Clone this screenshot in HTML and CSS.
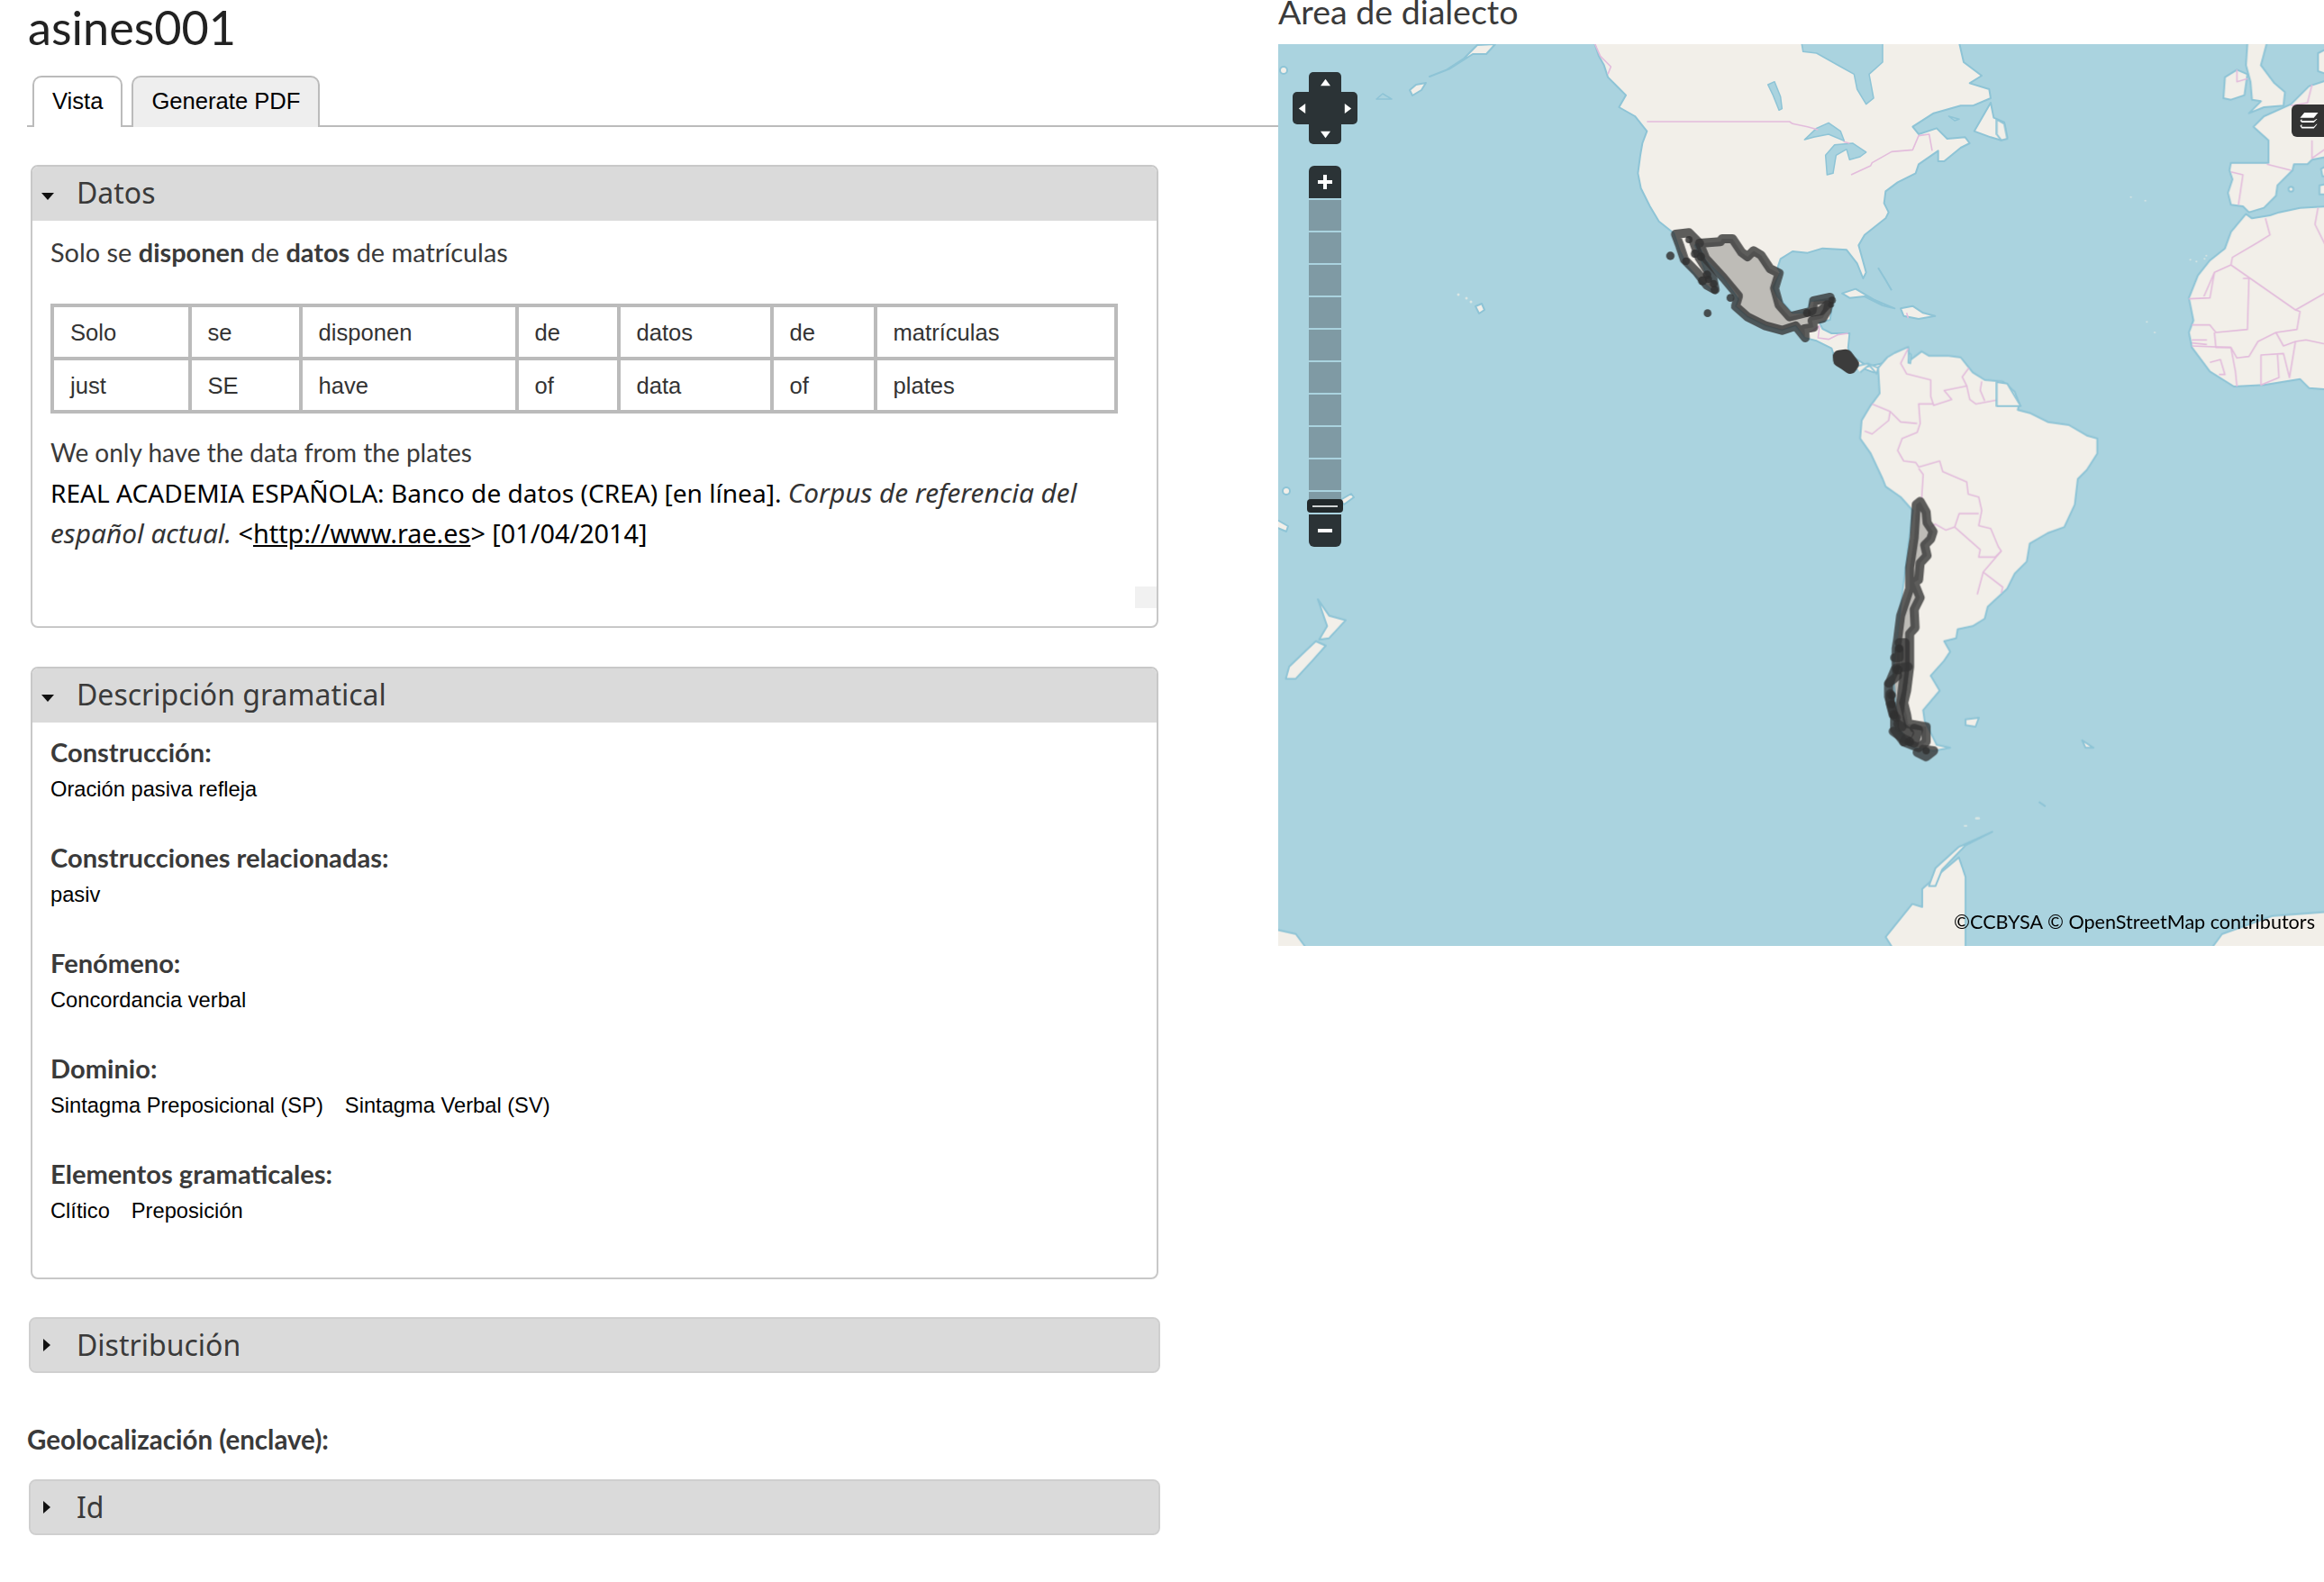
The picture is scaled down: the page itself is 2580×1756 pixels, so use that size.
FILE: index.html
```html
<!DOCTYPE html>
<html lang="es">
<head>
<meta charset="utf-8">
<title>asines001</title>
<link rel="stylesheet" href="styles.css">
</head>
<body>
<div class="page">
  <main class="left">
    <h1 class="title">asines001</h1>
    <ul class="tabs">
      <li class="tab tab-active">Vista</li>
      <li class="tab">Generate PDF</li>
    </ul>

    <section class="panel panel-datos">
      <h3 class="panel-head"><span class="arrow-down"></span>Datos</h3>
      <div class="panel-body">
        <p class="lead">Solo se <strong>disponen</strong> de <strong>datos</strong> de matrículas</p>
        <table class="gloss">
          <tr><td>Solo</td><td>se</td><td>disponen</td><td>de</td><td>datos</td><td>de</td><td>matrículas</td></tr>
          <tr><td>just</td><td>SE</td><td>have</td><td>of</td><td>data</td><td>of</td><td>plates</td></tr>
        </table>
        <p class="lead translation">We only have the data from the plates</p>
        <p class="cite">REAL ACADEMIA ESPAÑOLA: Banco de datos (CREA) [en línea]. <em>Corpus de referencia del español actual.</em> <span class="cite-end">&lt;<a href="#">http://www.rae.es</a>&gt; [01/04/2014]</span></p>
      </div>
      <div class="grip"></div>
    </section>

    <section class="panel panel-desc">
      <h3 class="panel-head"><span class="arrow-down"></span>Descripción gramatical</h3>
      <div class="panel-body">
        <div class="field"><div class="label">Construcción:</div><div class="values"><span>Oración pasiva refleja</span></div></div>
        <div class="field"><div class="label">Construcciones relacionadas:</div><div class="values"><span>pasiv</span></div></div>
        <div class="field"><div class="label">Fenómeno:</div><div class="values"><span>Concordancia verbal</span></div></div>
        <div class="field"><div class="label">Dominio:</div><div class="values"><span>Sintagma Preposicional (SP)</span><span>Sintagma Verbal (SV)</span></div></div>
        <div class="field"><div class="label">Elementos gramaticales:</div><div class="values"><span>Clítico</span><span>Preposición</span></div></div>
      </div>
    </section>

    <section class="panel panel-closed">
      <h3 class="panel-head"><span class="arrow-right"></span>Distribución</h3>
    </section>

    <div class="geo">Geolocalización (enclave):</div>

    <section class="panel panel-closed">
      <h3 class="panel-head"><span class="arrow-right"></span>Id</h3>
    </section>
  </main>

  <aside class="right">
    <h2 class="map-title">Area de dialecto</h2>
    <div class="map">
      <svg class="map-svg" viewBox="1419 49 1161 1001" width="1161" height="1001" aria-hidden="true">
        <g class="base">
          <!-- North America -->
          <g transform="translate(1760 49) scale(.33333)">
            <polygon class="land" points="30,-5 45,40 62,70 75,110 100,135 135,170 112,210 165,240 205,290 190,330 183,370 175,430 185,480 215,540 245,590 295,630 315,690 340,740 385,790 425,820 435,810 400,760 380,700 365,670 375,665 400,720 460,780 510,850 500,873 540,908 600,938 655,953 700,938 730,978 770,988 820,1013 830,1043 890,1088 920,1078 960,1093 990,1088 990,1063 940,1073 895,1043 875,1013 880,963 820,963 790,948 780,928 815,918 825,850 750,855 735,895 690,895 640,840 625,810 650,760 640,745 650,715 690,690 740,695 790,680 870,685 905,730 925,780 935,760 910,670 930,635 1000,580 1010,560 995,530 1000,490 1040,460 1100,430 1110,400 1175,355 1175,390 1195,390 1250,345 1280,330 1265,310 1205,315 1170,280 1110,300 1090,275 1160,230 1250,205 1290,205 1350,180 1345,150 1280,130 1320,105 1260,60 1245,-5"/>
            <polygon class="water" points="720,-5 725,25 770,30 850,75 895,100 905,150 935,200 960,180 945,100 990,60 990,-5"/>
            <polygon class="land" points="1350,195 1295,290 1350,310 1385,320 1405,310 1395,260 1360,245"/>
            <polygon class="water" points="730,318 770,280 810,262 850,290 862,322 810,300 760,310"/>
            <polygon class="water" points="800,370 830,335 890,330 935,360 915,375 880,385 870,350 835,370 825,430 805,435"/>
            <polygon class="water" points="608,135 630,125 650,175 655,215 645,220 625,170"/>
            <polygon class="water" points="1210,240 1245,250 1230,255"/>
            <polygon class="land" points="855,830 900,815 960,850 1030,880 990,870 930,840 880,845"/>
            <polygon class="land" points="1050,880 1090,872 1125,895 1165,905 1110,915 1060,905"/>
            <polyline class="coast" points="975,745 1000,785 1020,820"/>
            <polyline class="border" points="205,258 680,258 690,265 740,275 775,285"/>
            <polyline class="border" points="860,325 880,330"/>
            <polyline class="border" points="885,435 950,405 955,395 1020,358 1090,352 1110,305 1145,300 1155,355"/>
            <polyline class="border" points="30,-5 50,40 85,75 75,100"/>
            <polyline class="border" points="1070,895 1075,912"/>
          </g>
          <!-- Central America borders -->
          <g transform="translate(1780 230) scale(.33333)">
            <polyline class="border" points="690,415 720,395 715,435 750,440 780,425 815,420"/>
            <polyline class="border" points="915,530 925,548"/>
          </g>
          <!-- South America -->
          <g transform="translate(2020 380) scale(.33333)">
            <polygon class="land" points="195,85 225,50 250,35 295,15 300,60 340,30 365,45 430,45 470,50 510,100 550,125 610,130 650,165 665,205 660,225 700,235 760,265 830,275 890,310 925,320 925,370 890,425 860,455 850,540 815,615 760,635 700,670 690,730 650,770 625,820 560,880 550,920 510,945 460,955 455,985 415,995 435,1030 415,1060 370,1110 400,1160 345,1225 350,1260 390,1340 435,1350 380,1360 310,1350 260,1280 245,1100 270,880 310,560 270,515 220,480 210,455 170,370 135,320 140,260 170,210 200,170"/>
            <polyline class="land" points="120,80 160,70 195,85 190,105 165,75 135,100"/>
            <polyline class="border" points="295,20 270,70 290,105 370,125 370,180 380,210 440,190 415,160 490,145 475,115 497,85"/>
            <polyline class="border" points="490,145 500,190 520,205 600,190 635,160"/>
            <polyline class="border" points="540,130 535,160 550,195"/>
            <polyline class="border" points="595,130 595,190"/>
            <polyline class="border" points="380,205 330,205 335,270 325,300 275,320 260,360 280,395 320,400 330,415 400,395 410,430 490,465 495,505 530,515 540,560 530,610 570,620 595,680 605,695 585,715 530,715 535,690 450,615 420,625 385,605 370,615"/>
            <polyline class="border" points="175,205 235,230 270,265 325,270"/>
            <polyline class="border" points="235,230 230,260 175,305 150,295"/>
            <polyline class="border" points="330,420 345,440 340,520"/>
            <polyline class="border" points="530,570 465,570 450,615"/>
            <polyline class="border" points="605,695 545,765 525,840"/>
            <polyline class="border" points="545,765 610,815 605,835"/>
            <polygon class="water" points="297,35 305,40 303,70 295,68"/>
          </g>
          <!-- Europe and Africa -->
          <g transform="translate(2220 49) scale(.33333)">
            <polygon class="land" points="825,-5 890,-5 870,70 915,130 950,160 945,205 880,210 830,230 870,190 840,185 835,125 820,70"/>
            <polygon class="land" points="745,180 750,110 790,85 825,100 815,170 770,185"/>
            <polygon class="land" points="1090,120 1030,140 970,200 880,240 845,275 895,320 895,395 770,395 765,420 775,450 760,495 770,535 810,540 830,560 880,545 920,505 925,470 975,420 980,400 1025,400 1040,385 1090,375"/>
            <polygon class="land" points="1060,30 1080,20 1090,20 1090,100 1060,90"/>
            <polygon class="land" points="1090,405 1070,415 1075,440 1090,440"/>
            <polygon class="land" points="1065,470 1090,465 1090,500 1065,500"/>
            <polygon class="land" points="1090,540 1000,545 930,560 900,570 840,580 820,565 770,625 750,680 700,720 660,770 630,845 645,920 630,960 640,1010 700,1090 780,1140 880,1135 1000,1115 1030,1145 1090,1150"/>
            <circle class="land" cx="970" cy="483" r="8"/>
            <polygon class="land" points="-10,1125 25,1130 70,1205 -10,1205"/>
            <polygon class="land" points="-10,250 15,265 25,315 5,320 -10,300"/>
            <polyline class="border" points="790,85 790,125 825,115"/>
            <polyline class="border" points="890,400 970,420"/>
            <polyline class="border" points="770,425 810,435 795,535"/>
            <polyline class="border" points="1040,135 1025,195 970,205"/>
            <polyline class="border" points="1040,320 1040,380 1090,345"/>
            <polyline class="border" points="885,580 900,635 860,660 775,710 770,735 715,760 680,840"/>
            <polyline class="border" points="630,848 700,845 715,760"/>
            <polyline class="border" points="770,735 985,885 1090,825"/>
            <polyline class="border" points="810,780 830,780 825,950 720,960 700,935 640,935"/>
            <polyline class="border" points="985,885 1000,890 990,950 920,960 860,990 830,1040 790,1045 770,1010 720,1010 715,960"/>
            <polyline class="border" points="920,960 945,1005 985,990 1020,985 1090,1000"/>
            <polyline class="border" points="985,990 965,1110 945,1030 870,1035 870,1135 930,1110 925,1030"/>
            <polyline class="border" points="640,985 690,985"/>
            <polyline class="border" points="640,995 690,1000"/>
            <polyline class="border" points="640,1005 770,1010 785,1090 790,1140"/>
            <polyline class="border" points="700,1060 735,1050 750,1100 730,1100"/>
            <polyline class="border" points="1060,545 1050,600 1085,670"/>
            <circle class="isle" cx="635" cy="718" r="3"/><circle class="isle" cx="655" cy="724" r="3"/><circle class="isle" cx="682" cy="715" r="3"/><circle class="isle" cx="688" cy="704" r="3"/><circle class="isle" cx="490" cy="925" r="3"/><circle class="isle" cx="516" cy="960" r="3"/><circle class="isle" cx="485" cy="521" r="3"/><circle class="isle" cx="437" cy="509" r="3"/>
          </g>
          <!-- Pacific islands -->
          <polygon class="land" points="1587,85 1605,78 1625,65 1640,50 1660,49 1650,60 1635,60 1610,76"/>
          <polygon class="land" points="1565,100 1572,94 1583,92 1578,100 1568,106"/>
          <polygon class="water" points="1528,110 1535,104 1545,110"/>
          <polygon class="land" points="1638,340 1645,337 1648,344 1642,348"/>
          <circle class="isle" cx="1619" cy="327" r="1.5"/><circle class="isle" cx="1628" cy="331" r="1.5"/><circle class="isle" cx="1633" cy="335" r="1.5"/>
          <circle class="land" cx="1425" cy="78" r="4"/>
          <circle class="land" cx="1428" cy="545" r="4"/>
          <polygon class="land" points="1488,555 1500,548 1503,552 1492,560"/>
          <polygon class="land" points="1416,576 1430,584 1428,590 1416,585"/>
          <!-- Southern lands -->
          <g transform="translate(1420 540) scale(.73980 .33333)">
            <polygon class="land" points="58,375 75,430 100,445 75,505 60,510 72,465"/>
            <polygon class="land" points="55,515 70,530 50,580 25,640 10,640 15,600"/>
            <polygon class="land" points="1030,775 1050,770 1045,800 1030,795"/>
            <polygon class="land" points="1205,845 1222,870 1210,870"/>
            <polygon class="land" points="920,1535 910,1500 950,1390 965,1400 965,1340 985,1300 1020,1235 1030,1300 1030,1535"/>
            <polygon class="land" points="-5,1475 25,1490 40,1535 -5,1535"/>
            <polygon class="land" points="1400,1535 1415,1490 1490,1430 1580,1415 1580,1535"/>
            <polygon class="land" points="975,1330 985,1270 1020,1200 1070,1150 1030,1195 995,1275 985,1330"/>
            <circle class="isle" cx="1048" cy="1105" r="4"/>
            <circle class="isle" cx="1030" cy="1130" r="3"/>
            <polyline class="coast" points="1140,1050 1150,1065"/>
          </g>
        </g>
        <g class="overlay">
          <!-- Dialect area: Mexico -->
          <g transform="translate(1780 230) scale(.33333)">
            <polygon class="area" points="320,120 390,115 395,105 430,105 460,150 480,165 500,145 525,160 555,205 585,220 570,270 585,325 620,365 680,350 695,345 700,312 755,300 745,345 730,370 695,378 700,400 670,405 672,435 640,395 595,410 540,395 480,365 440,330 450,295 400,235 340,170"/>
            <polyline class="area-line" points="320,120 285,85 240,90 255,130 270,175 310,215 345,260 372,275 365,240 320,170 300,115"/>
            <polyline class="area-line" points="695,350 725,345 745,325"/>
            <circle class="dot" cx="223" cy="162" r="14"/><circle class="dot" cx="347" cy="353" r="13"/><circle class="dot" cx="423" cy="302" r="13"/><circle class="dot" cx="285" cy="108" r="12"/><circle class="dot" cx="275" cy="180" r="13"/><circle class="dot" cx="305" cy="155" r="14"/><circle class="dot" cx="325" cy="165" r="14"/><circle class="dot" cx="345" cy="225" r="14"/><circle class="dot" cx="330" cy="245" r="15"/><circle class="dot" cx="350" cy="240" r="12"/><circle class="dot" cx="367" cy="255" r="13"/><circle class="dot" cx="370" cy="275" r="13"/><circle class="dot" cx="762" cy="310" r="12"/><circle class="dot" cx="758" cy="325" r="10"/><circle class="dot" cx="678" cy="352" r="13"/>
            <polygon class="blob" points="785,497 808,494 830,522 822,534 802,520 786,510"/>
          </g>
          <!-- Dialect area: Chile -->
          <g transform="translate(2050 540) scale(.33333)">
            <polygon class="area" points="245,50 265,85 268,120 288,150 280,175 260,195 268,230 245,255 240,310 225,320 245,370 225,410 228,470 210,490 210,540 210,600 200,680 190,720 200,760 205,790 265,800 265,850 240,870 190,850 160,810 160,770 140,700 140,660 165,600 165,540 170,510 180,430 210,340 210,270 225,170 232,60"/>
            <polyline class="area-line" points="175,520 195,520 195,600 185,680 175,760 185,800"/>
            <polyline class="area-line" points="175,540 175,570 160,570"/>
            <polyline class="area-line" points="205,600 165,605 170,630 140,655"/>
            <polyline class="area-line" points="145,690 145,720 155,760 165,770"/>
            <polyline class="area-line" points="155,815 190,840 225,855 240,810 225,805"/>
            <polyline class="area-line" points="235,885 265,900 290,880 255,875"/>
            <polyline class="area-line" points="170,790 210,820 190,850"/>
            <circle class="dot" cx="175" cy="540" r="13"/><circle class="dot" cx="170" cy="610" r="16"/><circle class="dot" cx="150" cy="695" r="14"/><circle class="dot" cx="150" cy="725" r="14"/><circle class="dot" cx="158" cy="760" r="15"/><circle class="dot" cx="210" cy="850" r="15"/><circle class="dot" cx="265" cy="880" r="12"/>
          </g>
        </g>
      </svg>

      <div class="pan">
        <div class="pan-row pan-top"><svg class="ico" viewBox="0 0 12 12"><polygon points="6,2 12,10 0,10"/></svg></div>
        <div class="pan-row pan-mid">
          <svg class="ico" viewBox="0 0 12 12"><polygon points="2,6 10,0 10,12"/></svg>
          <svg class="ico" viewBox="0 0 12 12"><polygon points="10,6 2,0 2,12"/></svg>
        </div>
        <div class="pan-row pan-bot"><svg class="ico" viewBox="0 0 12 12"><polygon points="6,10 12,2 0,2"/></svg></div>
      </div>

      <div class="zoombar">
        <div class="zoom-btn zoom-in"><svg class="ico-lg" viewBox="0 0 18 18"><path d="M7 1h4v6h6v4h-6v6H7v-6H1V7h6z"/></svg></div>
        <div class="seg"></div><div class="seg"></div><div class="seg"></div><div class="seg"></div><div class="seg"></div><div class="seg"></div><div class="seg"></div><div class="seg"></div><div class="seg"></div><div class="seg seg-last"></div>
        <div class="handle"><span class="handle-line"></span></div>
        <div class="zoom-btn zoom-out"><svg class="ico-lg" viewBox="0 0 18 18"><path d="M1 7h16v4H1z"/></svg></div>
      </div>

      <div class="layers">
        <svg class="ico-layers" viewBox="0 0 22 22"><path d="M6 1h16l-5 6H1z"/><path d="M3 8.5l-2 2 2 2h14l4-4h-1l-3 2H3z"/><path d="M3 14.5l-2 2 2 3h14l4-5h-1l-3 3H3z"/></svg>
      </div>

      <div class="attrib">©CCBYSA © OpenStreetMap contributors</div>
    </div>
  </aside>
</div>
</body>
</html>
```
FILE: styles.css
```css
* { box-sizing: border-box; }
html, body { margin: 0; padding: 0; background: #fff; }
body { font-family: "Lato", "Noto Sans", sans-serif; color: #333; width: 2580px; height: 1756px; overflow: hidden; }

.page { display: grid; grid-template-columns: 1419px 1161px; align-items: start; }

.left { padding-left: 30px; min-width: 0; }
.title { margin: 0 0 0 1px; height: 84px; font-size: 52.2px; line-height: 60px; font-weight: 400; color: #222; }

.tabs { list-style: none; margin: 0; padding: 0 0 0 6px; height: 57px; display: flex; gap: 10px; border-bottom: 2px solid #bbb; }
.tab { height: 57px; padding: 0 20px; font: 25.6px/52px "Liberation Sans", Arial, sans-serif; color: #000; background: #eee; border: 2px solid #bbb; border-bottom: 0; border-radius: 10px 10px 0 0; }
.tab-active { background: #fff; }

.panel { position: relative; margin: 42px 0 0 4px; width: 1252px; border: 2px solid #c8c8c8; border-radius: 8px; background: #fff; }
.panel-head { margin: 0; height: 60px; display: flex; align-items: center; padding: 0 0 3px 49px; position: relative; background: #dadada; font-family: "Noto Sans", sans-serif; font-size: 32px; font-weight: 400; color: #3a3a3a; border-radius: 6px 6px 0 0; }
.panel-closed { margin-left: 2px; width: 1256px; background: #dadada; border-color: #cfcfcf; }
.panel-closed .panel-head { height: 58px; border-radius: 6px; padding: 0 0 2px 51px; }

.arrow-down { position: absolute; left: 10px; top: 29px; border-style: solid; border-width: 8px 7px 0; border-color: #111 transparent transparent; }
.arrow-right { position: absolute; left: 14px; top: 22px; border-style: solid; border-width: 7px 0 7px 8px; border-color: transparent transparent transparent #111; }

.panel-body { padding: 0 20px; }
.panel-datos { height: 514px; }
.panel-desc { height: 680px; margin-top: 43px; }

.lead { margin: 0; font-size: 28.9px; line-height: 45px; color: #3a3a3a; }
.panel-datos .lead:first-child { padding-top: 12px; }
.lead strong { font-weight: 700; }
.translation { margin-top: 21px; font-size: 28px; }

.gloss { margin-top: 35px; border-collapse: collapse; table-layout: fixed; width: 1181px; font: 25.6px/30px "Liberation Sans", Arial, sans-serif; color: #333; }
.gloss td { border: 4px solid #bbb; height: 59px; padding: 0 18px; }
.gloss td:nth-child(1) { width: 152.5px; }
.gloss td:nth-child(2) { width: 123px; }
.gloss td:nth-child(3) { width: 240px; }
.gloss td:nth-child(4) { width: 113px; }
.gloss td:nth-child(5) { width: 170px; }
.gloss td:nth-child(6) { width: 115px; }
.gloss td:nth-child(7) { width: 267.5px; }

.cite { margin: 0; font-family: "Noto Sans", sans-serif; font-size: 28.1px; line-height: 45px; color: #000; }
.cite em { color: #333; font-size: 29.8px; line-height: 1; }
.cite-end { font-size: 28.8px; line-height: 1; }
.cite a { color: #000; text-decoration: underline; }

.grip { position: absolute; right: 0; bottom: 20px; width: 24px; height: 24px; background: #f1f1f1; }

.field { height: 117px; padding-top: 13px; }
.label { font-size: 29.1px; line-height: 40px; font-weight: 700; color: #3a3a3a; }
.values { display: flex; gap: 24px; margin-top: 1px; font: 23.7px/40px "Liberation Sans", Arial, sans-serif; color: #000; }

.geo { margin-top: 54px; height: 64px; font-size: 29.5px; line-height: 40px; font-weight: 700; color: #3a3a3a; }
.geo + .panel { margin-top: 0; }

.right { min-width: 0; }
.map-title { margin: 0; height: 49px; font-size: 37.5px; line-height: 26px; font-weight: 400; color: #3a3a3a; }
.map { position: relative; width: 1161px; height: 1001px; overflow: hidden; background: #aad3df; }
.map-svg { display: block; }
.base { filter: blur(.5px); }
.overlay { filter: blur(.5px); }

.land { fill: #f2efe9; stroke: #8ec4d6; stroke-width: 2px; vector-effect: non-scaling-stroke; stroke-linejoin: round; }
.water { fill: #aad3df; stroke: #8ec4d6; stroke-width: 1.5px; vector-effect: non-scaling-stroke; stroke-linejoin: round; }
.coast { fill: none; stroke: #8ec4d6; stroke-width: 2px; vector-effect: non-scaling-stroke; }
.border { fill: none; stroke: #e3bcdc; stroke-width: 1.6px; vector-effect: non-scaling-stroke; stroke-linejoin: round; }
.isle { fill: #d9e6e4; }
.area { fill: #444; fill-opacity: .3; stroke: #333; stroke-opacity: .78; stroke-width: 10px; vector-effect: non-scaling-stroke; stroke-linejoin: round; }
.area-line { fill: none; stroke: #333; stroke-opacity: .78; stroke-width: 10px; vector-effect: non-scaling-stroke; stroke-linejoin: round; stroke-linecap: round; }
.dot { fill: #2f2f2f; fill-opacity: .82; }
.blob { fill: #3c3c3c; stroke: #3c3c3c; stroke-width: 14px; vector-effect: non-scaling-stroke; stroke-linejoin: round; }

.pan { position: absolute; left: 16px; top: 31px; width: 72px; height: 80px; display: flex; flex-direction: column; align-items: center; }
.pan-row { display: flex; align-items: center; justify-content: center; background: #2b3336; }
.pan-top { width: 36px; height: 22px; border-radius: 5px 5px 0 0; }
.pan-mid { width: 72px; height: 36px; border-radius: 5px; justify-content: space-between; padding: 0 5px; }
.pan-bot { width: 36px; height: 22px; border-radius: 0 0 5px 5px; }
.ico { width: 11px; height: 11px; fill: #fff; display: block; }

.zoombar { position: absolute; left: 34px; top: 135px; width: 36px; height: 424px; display: flex; flex-direction: column; align-items: center; }
.zoom-btn { width: 36px; height: 36px; display: flex; align-items: center; justify-content: center; background: #2b3336; flex: none; }
.zoom-in { border-radius: 6px 6px 0 0; margin-bottom: 2px; }
.zoom-out { border-radius: 0 0 6px 6px; }
.ico-lg { width: 18px; height: 18px; fill: #fff; display: block; }
.seg { width: 36px; height: 34px; margin-bottom: 2px; background: #7f9aa4; flex: none; }
.seg-last { height: 9px; margin: 0; }
.handle { width: 40px; height: 15px; margin: -1px 0 2px; border-radius: 4px; display: flex; align-items: center; justify-content: center; background: #22292b; flex: none; position: relative; }
.handle-line { display: block; width: 28px; height: 2px; background: #cfd3d3; }

.layers { position: absolute; right: 0; top: 67px; width: 36px; height: 36px; border-radius: 6px 0 0 6px; background: #333; padding: 8px 0 0 8px; }
.ico-layers { display: block; width: 22px; height: 21px; fill: #fff; }

.attrib { position: absolute; right: 10px; bottom: 14px; font-size: 21.6px; line-height: 26px; color: #000; }
```
